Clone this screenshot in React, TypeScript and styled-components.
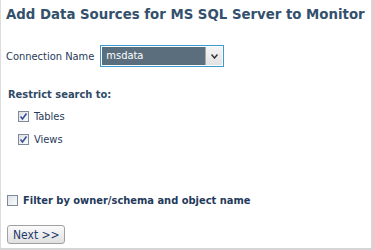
import React from "react";
import styled, { createGlobalStyle } from "styled-components";

const Global = createGlobalStyle`
  html, body { margin: 0; padding: 0; background: #fff; }
  body { font-family: Tahoma, "DejaVu Sans Condensed", "DejaVu Sans", sans-serif; }
`;

const Frame = styled.div`
  width: 373px;
  height: 250px;
  box-sizing: border-box;
  border-left: 1px solid #dcdcdc;
  border-right: 2px solid #d6d6d6;
  border-bottom: 2px solid #d6d6d6;
  padding: 5px 0 0 5px;
  display: flex;
  flex-direction: column;
`;

const Title = styled.h1`
  margin: 0;
  font-family: "DejaVu Sans Condensed", "DejaVu Sans", sans-serif;
  font-weight: bold;
  font-size: 14.8px;
  line-height: 18px;
  color: #33506d;
`;

const Row = styled.div`
  display: flex;
  align-items: center;
  gap: 6px;
  margin-top: 22px;
`;

const Label = styled.span`
  font-family: "DejaVu Sans Condensed", "DejaVu Sans", sans-serif;
  font-size: 11px;
  color: #1f3a5a;
`;

const Select = styled.div`
  width: 124px;
  height: 22px;
  box-sizing: border-box;
  border: 1px solid #3d9ad1;
  display: flex;
  background: #fff;
`;

const SelectValue = styled.div`
  flex: 1;
  background: #5a6e7e;
  color: #fff;
  font-family: "DejaVu Sans Condensed", "DejaVu Sans", sans-serif;
  font-size: 11px;
  line-height: 18px;
  padding-left: 4px;
  margin: 1px 0 1px 1px;
`;

const SelectButton = styled.div`
  width: 16px;
  margin: 1px 1px 1px 0;
  background: linear-gradient(#f4f4f4, #e2e2e2);
  border-left: 1px solid #a8a8a8;
  display: flex;
  align-items: center;
  justify-content: center;
`;

const Section = styled.div`
  margin-top: 21px;
  font-family: "DejaVu Sans Condensed", "DejaVu Sans", sans-serif;
  font-weight: bold;
  font-size: 11px;
  color: #2f4a66;
  padding-left: 2px;
`;

const CheckList = styled.div`
  display: flex;
  flex-direction: column;
  gap: 11px;
  margin-top: 9px;
  padding-left: 12px;
`;

const CheckRow = styled.label<{ $bold?: boolean }>`
  display: flex;
  align-items: center;
  gap: 5px;
  font-family: "DejaVu Sans Condensed", "DejaVu Sans", sans-serif;
  font-size: 11px;
  font-weight: ${(p) => (p.$bold ? "bold" : "normal")};
  color: #1f3a5a;
  height: 12px;
`;

const Box = styled.span`
  width: 11px;
  height: 11px;
  box-sizing: border-box;
  border: 1px solid #7c8a9a;
  background: linear-gradient(135deg, #dfe2e6, #fbfbfb);
  display: flex;
  align-items: center;
  justify-content: center;
`;

const Bottom = styled.div`
  margin-top: 49px;
  padding-left: 1px;
`;

const Button = styled.button`
  margin-top: 19px;
  width: 58px;
  height: 19px;
  padding: 0;
  border: 1px solid #a0a0a0;
  border-radius: 3px;
  background: linear-gradient(#fbfbfb, #e0e0e0);
  font-family: "DejaVu Sans Condensed", "DejaVu Sans", sans-serif;
  font-size: 12px;
  color: #1f3a6a;
  text-align: left;
  padding-left: 5px;
`;

const Check = () => (
  <svg width="9" height="9" viewBox="0 0 9 9">
    <path d="M1.5 4.5 L3.5 7 L7.5 1.5" fill="none" stroke="#3a4f9a" strokeWidth="1.6" />
  </svg>
);

export default function App() {
  return (
    <>
      <Global />
      <Frame>
        <Title>Add Data Sources for MS SQL Server to Monitor</Title>
        <Row>
          <Label>Connection Name</Label>
          <Select>
            <SelectValue>msdata</SelectValue>
            <SelectButton>
              <svg width="7" height="5" viewBox="0 0 7 5">
                <path d="M0.5 0.5 L3.5 4 L6.5 0.5" fill="none" stroke="#333" strokeWidth="1.5" />
              </svg>
            </SelectButton>
          </Select>
        </Row>
        <Section>Restrict search to:</Section>
        <CheckList>
          <CheckRow>
            <Box><Check /></Box>Tables
          </CheckRow>
          <CheckRow>
            <Box><Check /></Box>Views
          </CheckRow>
        </CheckList>
        <Bottom>
          <CheckRow $bold>
            <Box />Filter by owner/schema and object name
          </CheckRow>
          <Button>Next &gt;&gt;</Button>
        </Bottom>
      </Frame>
    </>
  );
}
